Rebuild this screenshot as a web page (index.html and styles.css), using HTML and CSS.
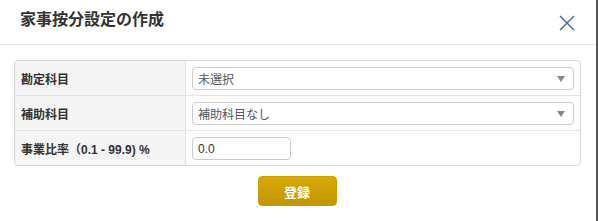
FILE: index.html
```html
<!DOCTYPE html>
<html lang="ja">
<head>
  <meta charset="UTF-8" />
  <title>家事按分設定の作成</title>
  <link rel="stylesheet" href="styles.css">
</head>
<body>

  <div class="modal">
    <!-- HEADER -->
    <div class="modal-header">
      <h1 class="modal-title">家事按分設定の作成</h1>
      <button class="close" aria-label="閉じる">
        <svg width="16" height="16" viewBox="0 0 16 16">
          <path d="M1 1 L15 15 M15 1 L1 15" stroke="#3d62a3" stroke-width="1.4" fill="none" />
        </svg>
      </button>
    </div>

    <!-- FORM -->
    <div class="modal-body">
      <table class="form-table">
        <tr>
          <th>勘定科目</th>
          <td>
            <div class="select wide">
              <span>未選択</span>
              <i class="caret"></i>
            </div>
          </td>
        </tr>
        <tr>
          <th>補助科目</th>
          <td>
            <div class="select wide">
              <span>補助科目なし</span>
              <i class="caret"></i>
            </div>
          </td>
        </tr>
        <tr>
          <th>事業比率（0.1 - 99.9) %</th>
          <td>
            <input type="text" class="ratio" value="0.0" />
          </td>
        </tr>
      </table>
    </div>

    <!-- FOOTER -->
    <div class="modal-footer">
      <button class="btn-save">登録</button>
    </div>
  </div>

</body>
</html>
```

FILE: styles.css
```css
body {
  margin: 0;
  background-color: #fff;
  font-family: "Liberation Sans", "Noto Sans CJK JP", sans-serif;
  color: #333;
}

.modal {
  width: 596px;
  height: 221px;
  border-right: 2px solid #555;
  background-color: #fff;
}

.modal-header {
  display: flex;
  align-items: center;
  justify-content: space-between;
  height: 44px;
  padding: 0 21px 0 20px;
  border-bottom: 1px solid #e5e5e5;
}

.modal-title {
  margin: 0 0 8px;
  font-size: 16px;
  font-weight: bold;
  color: #333;
}

.close {
  display: flex;
  padding: 0;
  margin-top: 2px;
  border: none;
  background: none;
  cursor: pointer;
}

.modal-body {
  padding: 15px 15px 10px 14px;
}

.form-table {
  width: 567px;
  border-collapse: separate;
  border-spacing: 0;
  border: 1px solid #d6d6d6;
  border-radius: 4px;
  font-size: 12px;
}

.form-table th,
.form-table td {
  height: 22px;
  padding: 6px 6px 5px;
  border-bottom: 1px solid #e3e3e3;
}

.form-table tr:last-child th,
.form-table tr:last-child td {
  border-bottom: none;
}

.form-table th {
  width: 158px;
  text-align: left;
  font-weight: bold;
  color: #333;
  background-color: #f5f5f5;
  border-right: 1px solid #e3e3e3;
  border-radius: 4px 0 0 0;
}

.form-table tr + tr th {
  border-radius: 0;
}

.form-table tr:last-child th {
  border-radius: 0 0 0 4px;
}

.select {
  display: flex;
  align-items: center;
  justify-content: space-between;
  box-sizing: border-box;
  height: 23px;
  padding: 0 8px 0 5px;
  border: 1px solid #ccc;
  border-radius: 4px;
  color: #555;
  font-size: 12px;
}

.caret {
  width: 0;
  height: 0;
  border-left: 4px solid transparent;
  border-right: 4px solid transparent;
  border-top: 6px solid #888;
}

.ratio {
  display: block;
  box-sizing: border-box;
  width: 99px;
  height: 23px;
  padding: 0 5px;
  border: 1px solid #ccc;
  border-radius: 4px;
  font-family: "Liberation Sans", sans-serif;
  font-size: 12px;
  color: #333;
}

.modal-footer {
  display: flex;
  justify-content: center;
  padding-right: 2px;
}

.btn-save {
  width: 79px;
  height: 30px;
  border: 1px solid #c99e00;
  border-radius: 4px;
  background: linear-gradient(#d7a908, #c39500);
  color: #fff;
  font-family: "Noto Sans CJK JP", sans-serif;
  font-size: 13px;
  font-weight: bold;
  cursor: pointer;
}
```
